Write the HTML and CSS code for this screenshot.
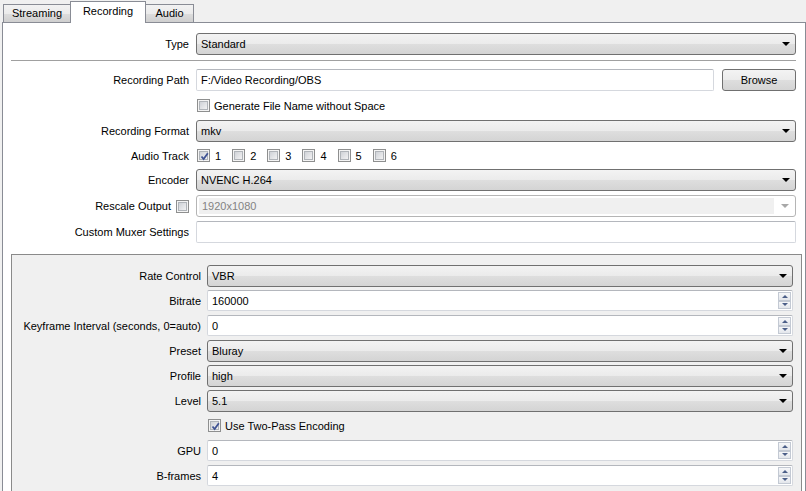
FILE: index.html
```html
<!DOCTYPE html>
<html lang="en">
<head>
    <meta charset="UTF-8">
    <title>Output Settings</title>
    <link rel="stylesheet" href="styles.css">
</head>
<body>

<div class="tabs">
    <div class="tab tab-streaming">Streaming</div>
    <div class="tab tab-recording active">Recording</div>
    <div class="tab tab-audio">Audio</div>
</div>

<div class="panel">
    <div class="section">
        <div class="row">
            <label>Type</label>
            <div class="combo">Standard<span class="arrow"></span></div>
        </div>

        <div class="sep"></div>

        <div class="row">
            <label>Recording Path</label>
            <div class="edit">F:/Video Recording/OBS</div>
            <div class="button">Browse</div>
        </div>

        <div class="row check-row">
            <label></label>
            <span class="check"></span>
            <span class="check-text">Generate File Name without Space</span>
        </div>

        <div class="row">
            <label>Recording Format</label>
            <div class="combo">mkv<span class="arrow"></span></div>
        </div>

        <div class="row check-row short">
            <label>Audio Track</label>
            <div class="tracks">
                <span class="track"><span class="check checked"><svg viewBox="0 0 9 9"><path d="M1.5 4.5 L3.6 7 L7.8 1.2" /></svg></span>1</span>
                <span class="track"><span class="check"></span>2</span>
                <span class="track"><span class="check"></span>3</span>
                <span class="track"><span class="check"></span>4</span>
                <span class="track"><span class="check"></span>5</span>
                <span class="track"><span class="check"></span>6</span>
            </div>
        </div>

        <div class="row">
            <label>Encoder</label>
            <div class="combo">NVENC H.264<span class="arrow"></span></div>
        </div>

        <div class="row">
            <label>Rescale Output <span class="check inline"></span></label>
            <div class="combo disabled"><span class="combo-text">1920x1080</span><span class="arrow"></span></div>
        </div>

        <div class="row">
            <label>Custom Muxer Settings</label>
            <div class="edit"></div>
        </div>
    </div>

    <div class="group">
        <div class="row">
            <label>Rate Control</label>
            <div class="combo">VBR<span class="arrow"></span></div>
        </div>

        <div class="row">
            <label>Bitrate</label>
            <div class="edit spin">160000<span class="spin-buttons"><span class="up"></span><span class="down"></span></span></div>
        </div>

        <div class="row">
            <label>Keyframe Interval (seconds, 0=auto)</label>
            <div class="edit spin">0<span class="spin-buttons"><span class="up"></span><span class="down"></span></span></div>
        </div>

        <div class="row">
            <label>Preset</label>
            <div class="combo">Bluray<span class="arrow"></span></div>
        </div>

        <div class="row">
            <label>Profile</label>
            <div class="combo">high<span class="arrow"></span></div>
        </div>

        <div class="row">
            <label>Level</label>
            <div class="combo">5.1<span class="arrow"></span></div>
        </div>

        <div class="row check-row">
            <label></label>
            <span class="check checked"><svg viewBox="0 0 9 9"><path d="M1.5 4.5 L3.6 7 L7.8 1.2" /></svg></span>
            <span class="check-text">Use Two-Pass Encoding</span>
        </div>

        <div class="row">
            <label>GPU</label>
            <div class="edit spin">0<span class="spin-buttons"><span class="up"></span><span class="down"></span></span></div>
        </div>

        <div class="row">
            <label>B-frames</label>
            <div class="edit spin">4<span class="spin-buttons"><span class="up"></span><span class="down"></span></span></div>
        </div>
    </div>
</div>

</body>
</html>
```

FILE: styles.css
```css
body {
    margin: 0;
    background: #f0f0f0;
    font-family: "Liberation Sans", Arial, sans-serif;
    font-size: 11px;
    color: #000;
    overflow: hidden;
}
.tabs {
    display: flex;
    align-items: flex-end;
    height: 22px;
    padding-left: 3px;
}
.tab {
    box-sizing: border-box;
    height: 18px;
    line-height: 17px;
    text-align: center;
    border: 1px solid #898c95;
    border-bottom: none;
    border-left: none;
    background: linear-gradient(#f2f2f2, #ebebeb 50%, #dddddd 51%, #cfcfcf);
}
.tab-streaming {
    width: 68px;
    border-left: 1px solid #898c95;
}
.tab-recording {
    width: 76px;
}
.tab-audio {
    width: 48px;
}
.tab.active {
    height: 22px;
    line-height: 19px;
    margin-bottom: -1px;
    background: #fff;
    position: relative;
    z-index: 1;
    border-left: 1px solid #898c95;
    margin-left: -1px;
}
.panel {
    box-sizing: border-box;
    margin-left: 2px;
    border: 1px solid #898c95;
    border-bottom: none;
    background: #fff;
    padding: 10px 3px 0 8px;
    height: 469px;
    overflow: hidden;
}
.section {
    padding-right: 6px;
}
.row {
    display: flex;
    align-items: center;
    height: 22px;
    margin-bottom: 4px;
}
.row label {
    flex: none;
    width: 178px;
    margin-right: 7px;
    text-align: right;
    display: flex;
    align-items: center;
    justify-content: flex-end;
}
.row.check-row {
    height: 21px;
}
.row.check-row.short {
    height: 19px;
}
.sep {
    height: 1px;
    background: #a0a0a0;
    border-bottom: 1px solid #fff;
    margin: 5px 0 7px 0;
}
.combo {
    flex: 1;
    box-sizing: border-box;
    height: 100%;
    display: flex;
    align-items: center;
    padding-left: 4px;
    border: 1px solid #707070;
    border-radius: 3px;
    background: linear-gradient(#f3f3f3, #ebebeb 50%, #dedede 51%, #d4d4d4);
}
.arrow {
    margin-left: auto;
    margin-right: 5px;
    width: 0;
    height: 0;
    border-left: 4px solid transparent;
    border-right: 4px solid transparent;
    border-top: 4px solid #000;
}
.combo.disabled {
    border-color: #b5b5b5;
    background: #fff;
    color: #838383;
    padding: 2px;
}
.combo-text {
    flex: 1;
    align-self: stretch;
    display: flex;
    align-items: center;
    padding-left: 3px;
    background: #f0f0f0;
    margin-right: 7px;
}
.combo.disabled .arrow {
    border-top-color: #a8a8a8;
    margin-left: 0;
    margin-right: 4px;
}
.edit {
    flex: 1;
    box-sizing: border-box;
    height: 100%;
    display: flex;
    align-items: center;
    padding-left: 4px;
    background: #fff;
    border: 1px solid #d5d8de;
    border-top-color: #b4b7bd;
    border-radius: 2px;
}
.button {
    box-sizing: border-box;
    width: 74px;
    height: 100%;
    margin-left: 8px;
    display: flex;
    align-items: center;
    justify-content: center;
    border: 1px solid #707070;
    border-radius: 3px;
    background: linear-gradient(#f3f3f3, #ebebeb 50%, #dedede 51%, #d4d4d4);
}
.check {
    flex: none;
    box-sizing: border-box;
    display: inline-block;
    width: 13px;
    height: 13px;
    padding: 1px;
    border: 1px solid #8e8f8f;
    background: #f4f4f4;
    position: relative;
}
.check::before {
    content: "";
    display: block;
    width: 9px;
    height: 9px;
    box-sizing: border-box;
    border: 1px solid #b0b4b9;
    background: linear-gradient(135deg, #cfd2d7, #f2f2f3);
}
.check svg {
    position: absolute;
    left: 2px;
    top: 2px;
    width: 9px;
    height: 9px;
}
.check svg path {
    fill: none;
    stroke: #3f5393;
    stroke-width: 1.8;
}
.check-row .check {
    margin-left: 1px;
}
.check-text {
    margin-left: 4px;
}
.check.inline {
    margin-left: 5px;
}
.tracks {
    display: flex;
    align-items: center;
}
.track {
    display: flex;
    align-items: center;
    margin-right: 10px;
}
.track .check {
    margin-right: 5px;
}
.group {
    border: 1px solid #8a8a8a;
    background: #f0f0f0;
    margin-top: 11px;
    padding: 10px 8px 10px 0;
}
.group .row {
    height: 21px;
}
.group .row.check-row {
    height: 21px;
}
.group .row label {
    width: 189px;
    margin-right: 6px;
}
.group .combo {
    height: 22px;
}
.spin {
    position: relative;
}
.spin-buttons {
    position: absolute;
    right: 1px;
    top: 1px;
    bottom: 1px;
    width: 13px;
    display: flex;
    flex-direction: column;
}
.spin-buttons span {
    flex: 1;
    box-sizing: border-box;
    border: 1px solid #c3c9d3;
    background: linear-gradient(#f6f7f9, #e3e6eb);
    display: flex;
    align-items: center;
    justify-content: center;
}
.spin-buttons .up::after {
    content: "";
    border-left: 3px solid transparent;
    border-right: 3px solid transparent;
    border-bottom: 3px solid #4c5f88;
}
.spin-buttons .down::after {
    content: "";
    border-left: 3px solid transparent;
    border-right: 3px solid transparent;
    border-top: 3px solid #4c5f88;
}
```
